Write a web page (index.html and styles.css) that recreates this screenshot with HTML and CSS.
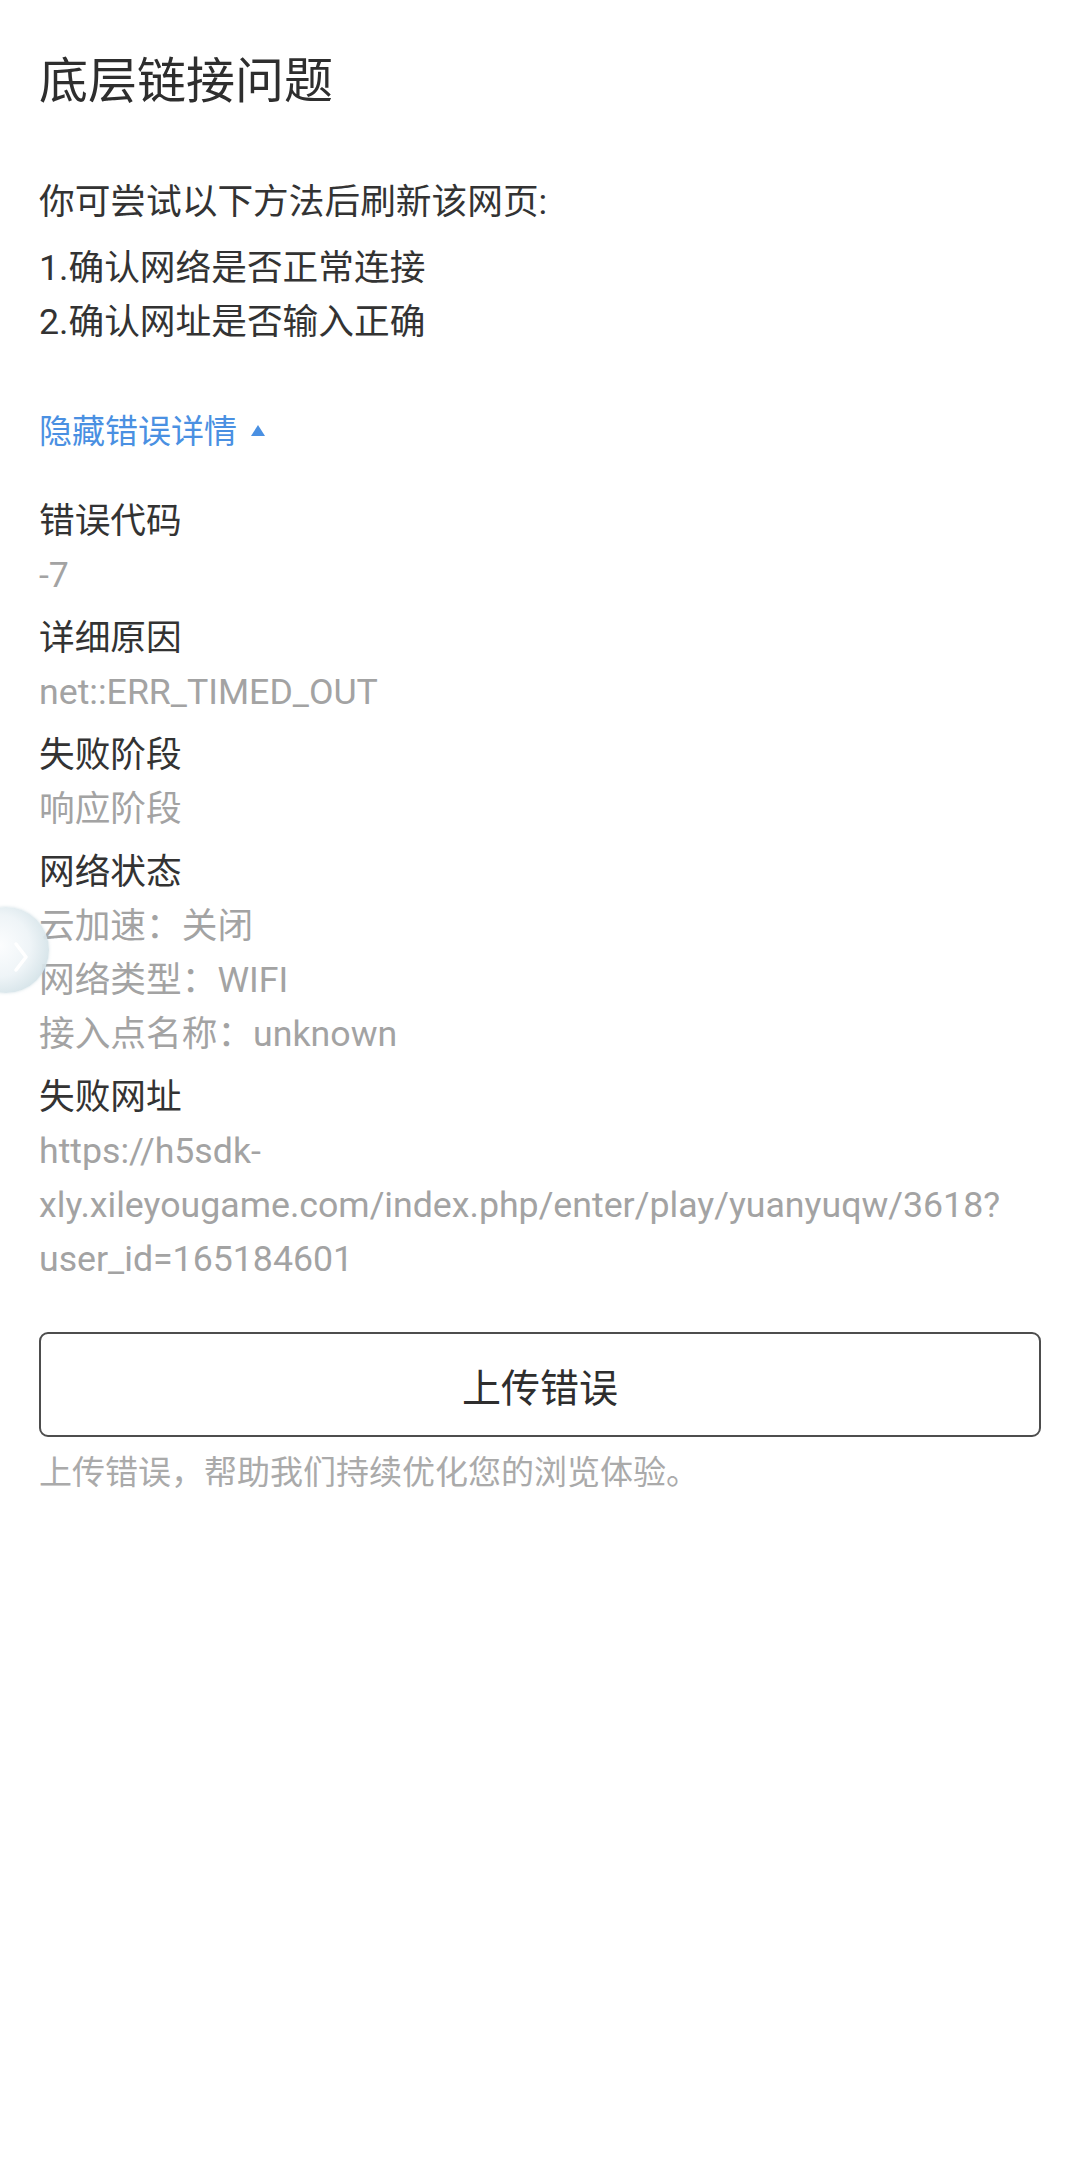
FILE: index.html
```html
<!DOCTYPE html>
<html lang="zh-CN">
<head>
<meta charset="utf-8">
<title>底层链接问题</title>
<link rel="stylesheet" href="styles.css">
</head>
<body>
<div class="page">
  <h1 class="title">底层链接问题</h1>
  <p class="intro">你可尝试以下方法后刷新该网页:</p>
  <ul class="steps">
    <li>1.确认网络是否正常连接</li>
    <li>2.确认网址是否输入正确</li>
  </ul>
  <div class="toggle">隐藏错误详情<span class="caret"></span></div>
  <dl class="details">
    <dt>错误代码</dt>
    <dd>-7</dd>
    <dt>详细原因</dt>
    <dd>net::ERR_TIMED_OUT</dd>
    <dt>失败阶段</dt>
    <dd>响应阶段</dd>
    <dt>网络状态</dt>
    <dd>云加速：关闭</dd>
    <dd>网络类型：WIFI</dd>
    <dd>接入点名称：unknown</dd>
    <dt>失败网址</dt>
    <dd>https://h5sdk-<br>xly.xileyougame.com/index.php/enter/play/yuanyuqw/3618?<br>user_id=165184601</dd>
  </dl>
  <button class="upload" type="button">上传错误</button>
  <p class="note">上传错误，帮助我们持续优化您的浏览体验。</p>
</div>
<div class="float-btn">
  <svg class="chev" width="16" height="32" viewBox="0 0 16 32"><path d="M3 3 L13 16 L3 29" fill="none" stroke="#ffffff" stroke-width="3.5" stroke-linecap="round" stroke-linejoin="round"/></svg>
</div>
</body>
</html>
```
FILE: styles.css
```css
html, body {
  margin: 0;
  padding: 0;
  background: #ffffff;
}
body {
  font-family: Roboto, "Noto Sans CJK SC", "Noto Sans", sans-serif;
  color: #333333;
}
.page {
  padding: 52px 39px 0 39px;
}
.title {
  margin: 0;
  font-size: 49px;
  font-weight: 400;
  line-height: 60px;
  color: #2e2e2e;
}
.intro {
  margin: 63px 0 0 0;
  font-size: 35.7px;
  line-height: 54px;
}
.steps {
  list-style: none;
  margin: 12px 0 0 0;
  padding: 0;
  font-size: 35.7px;
  line-height: 54px;
}
.toggle {
  margin-top: 56px;
  font-size: 33px;
  line-height: 54px;
  color: #4a90e2;
  display: flex;
  align-items: center;
}
.caret {
  width: 0;
  height: 0;
  margin-left: 14px;
  margin-top: -3px;
  border-left: 7.5px solid transparent;
  border-right: 7.5px solid transparent;
  border-bottom: 11px solid #4a90e2;
}
.details {
  margin: 35px 0 0 0;
  font-size: 35.7px;
  line-height: 54px;
}
.details dt {
  margin-top: 9px;
  color: #333333;
}
.details dt:first-child {
  margin-top: 0;
}
.details dd {
  margin: 0;
  color: #a3a3a3;
}
.upload {
  display: block;
  box-sizing: border-box;
  width: 100%;
  height: 105px;
  margin-top: 46px;
  border: 2px solid #4d4d4d;
  border-radius: 9px;
  background: #ffffff;
  font-family: Roboto, "Noto Sans CJK SC", sans-serif;
  font-size: 39px;
  color: #2e2e2e;
  padding: 0;
}
.note {
  margin: 9px 0 0 0;
  font-size: 33px;
  line-height: 54px;
  color: #aaaaaa;
}
.float-btn {
  position: absolute;
  left: -37px;
  top: 907px;
  width: 86px;
  height: 86px;
  border-radius: 50%;
  background: radial-gradient(circle at 42% 45%, rgba(252,253,254,0.97) 0%, rgba(238,244,247,0.96) 45%, rgba(205,222,228,0.92) 82%, rgba(185,207,214,0.7) 100%);
  box-shadow: 0 0 3px rgba(170,195,205,0.5);
}
.chev {
  position: absolute;
  left: 50px;
  top: 34px;
}
```
